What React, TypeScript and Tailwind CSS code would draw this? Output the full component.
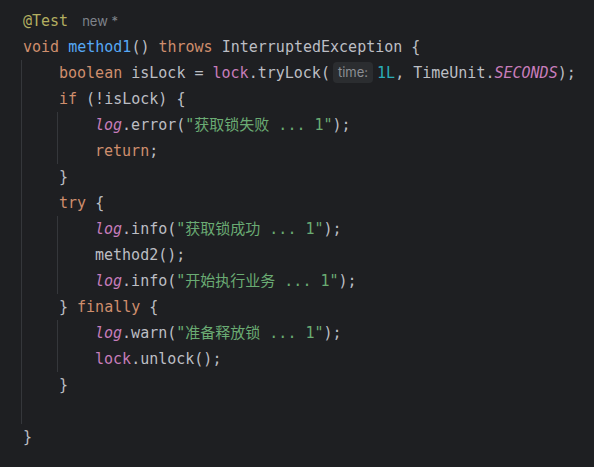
import type { ReactNode } from 'react';

const kw = 'text-[#cf8e6d]';
const str = 'text-[#6aab73]';
const fld = 'text-[#c77dbb]';
const stat = 'text-[#c77dbb] italic';

function Line({ children }: { children?: ReactNode }) {
  return <div className="h-[26px] leading-[26px] whitespace-pre">{children}</div>;
}

// indent block with the vertical guide 2px left of the column
function Block({ children }: { children: ReactNode }) {
  return <div className="-ml-[2px] border-l border-[#35373b] pl-[37px]">{children}</div>;
}

function Hint({ label }: { label: string }) {
  return (
    <span className="inline-flex items-center h-[21px] align-middle ml-[3px] mr-[4px] px-[5px] rounded-[4px] bg-[#2b2d30] text-[#8c8f94] text-[13px] leading-none font-['Inter','Noto_Sans',sans-serif] -translate-y-[1px]">
      {label}
    </span>
  );
}

export default function App() {
  return (
    <div className="w-[594px] h-[467px] overflow-hidden bg-[#1e1f22] text-[#bcbec4] text-[15px] font-['DejaVu_Sans_Mono','Noto_Sans_CJK_SC',monospace] pt-[8px] pl-[23px]">
      <Line>
        <span className="text-[#b3ae60]">@Test</span>
        <span className="ml-[14px] text-[13px] text-[#7f838a] font-['Inter','Noto_Sans',sans-serif]">new *</span>
      </Line>
      <Line>
        <span className={kw}>void</span> <span className="text-[#56a8f5]">method1</span>() <span className={kw}>throws</span> InterruptedException {'{'}
      </Line>
      <Block>
        <Line>
          <span className={kw}>boolean</span> isLock = <span className={fld}>lock</span>.tryLock(<Hint label="time:" />
          <span className="text-[#2aacb8]">1L</span>, TimeUnit.<span className={stat}>SECONDS</span>);
        </Line>
        <Line>
          <span className={kw}>if</span> (!isLock) {'{'}
        </Line>
        <Block>
          <Line>
            <span className={stat}>log</span>.error(<span className={str}>"获取锁失败 ... 1"</span>);
          </Line>
          <Line>
            <span className={kw}>return</span>;
          </Line>
        </Block>
        <Line>{'}'}</Line>
        <Line>
          <span className={kw}>try</span> {'{'}
        </Line>
        <Block>
          <Line>
            <span className={stat}>log</span>.info(<span className={str}>"获取锁成功 ... 1"</span>);
          </Line>
          <Line>method2();</Line>
          <Line>
            <span className={stat}>log</span>.info(<span className={str}>"开始执行业务 ... 1"</span>);
          </Line>
        </Block>
        <Line>
          {'} '}<span className={kw}>finally</span> {'{'}
        </Line>
        <Block>
          <Line>
            <span className={stat}>log</span>.warn(<span className={str}>"准备释放锁 ... 1"</span>);
          </Line>
          <Line>
            <span className={fld}>lock</span>.unlock();
          </Line>
        </Block>
        <Line>{'}'}</Line>
        <Line />
      </Block>
      <Line>{'}'}</Line>
    </div>
  );
}
